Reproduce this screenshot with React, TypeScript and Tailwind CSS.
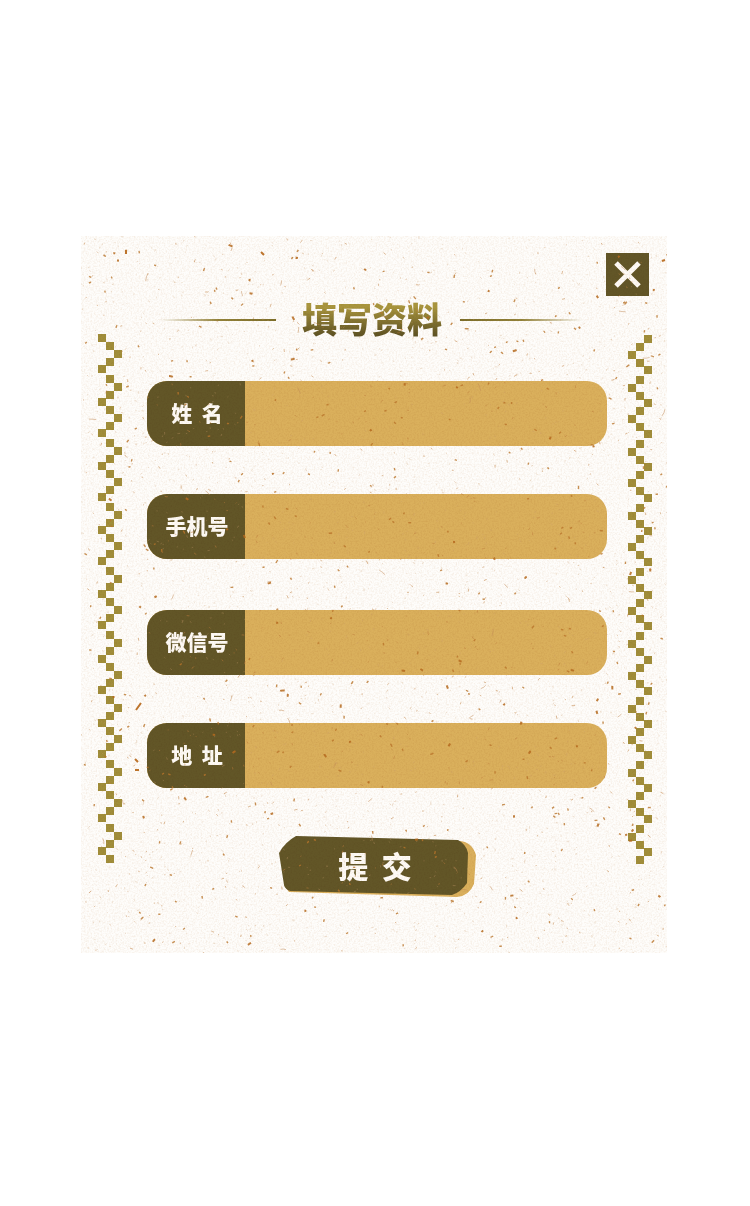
import { useMemo } from "react";

const WIDTH = 586;
const HEIGHT = 717;

function createRandom(seed: number) {
  let state = seed;
  return () => {
    state = (state * 1664525 + 1013904223) % 4294967296;
    return state / 4294967296;
  };
}

/** Short bent fibres, joined into one path per tone. */
function fibres(seed: number, count: number, min: number, max: number) {
  const random = createRandom(seed);
  let d = "";
  for (let i = 0; i < count; i++) {
    const x = random() * WIDTH;
    const y = random() * HEIGHT;
    const angle = random() * Math.PI * 2;
    const bend = angle + (random() - 0.5) * 1.4;
    const length = min + random() * random() * (max - min);
    const dx = Math.cos(angle) * length * 0.5;
    const dy = Math.sin(angle) * length * 0.5;
    const ex = dx + Math.cos(bend) * length * 0.5;
    const ey = dy + Math.sin(bend) * length * 0.5;
    d += `M${x.toFixed(1)} ${y.toFixed(1)}q${dx.toFixed(1)} ${dy.toFixed(1)} ${ex.toFixed(1)} ${ey.toFixed(1)}`;
  }
  return d;
}

function PaperTexture() {
  const layers = useMemo(
    () => [
      { d: fibres(11, 1700, 1, 3), color: "#c99a6c", opacity: 0.35, width: 1 },
      { d: fibres(29, 750, 1, 4), color: "#bd7c3c", opacity: 0.55, width: 1 },
      { d: fibres(53, 360, 2, 4), color: "#b9742b", opacity: 0.8, width: 1.4 },
      { d: fibres(71, 80, 2, 5), color: "#b56a1f", opacity: 0.85, width: 2 },
      { d: fibres(97, 40, 5, 9), color: "#c28a55", opacity: 0.5, width: 1 },
    ],
    [],
  );
  return (
    <>
      <svg
        aria-hidden="true"
        className="pointer-events-none absolute inset-0 h-full w-full mix-blend-multiply"
      >
        <filter id="grain" x="0" y="0" width="100%" height="100%">
          <feTurbulence type="fractalNoise" baseFrequency="0.6" numOctaves="3" seed="4" />
          <feColorMatrix values="0 0 0 0 0.72  0 0 0 0 0.52  0 0 0 0 0.36  0.55 0 0 0 -0.22" />
        </filter>
        <rect width="100%" height="100%" filter="url(#grain)" />
      </svg>
      <svg
        aria-hidden="true"
        className="pointer-events-none absolute inset-0 h-full w-full"
        viewBox={`0 0 ${WIDTH} ${HEIGHT}`}
        preserveAspectRatio="xMidYMid slice"
        fill="none"
      >
        {layers.map((layer) => (
          <path
            key={layer.color}
            d={layer.d}
            stroke={layer.color}
            strokeOpacity={layer.opacity}
            strokeWidth={layer.width}
          />
        ))}
        <path
          d="M55 474l5-7M54 523l3 3M54 534h4M45 14v4M180 16l3 3M581 25l3-1"
          stroke="#bd742c"
          strokeWidth="2"
        />
      </svg>
    </>
  );
}

const STEP_TOPS = [0, 8, 16, 24, 31, 41, 49, 57];
const STEP_COLUMNS = [0, 8, 16, 8];

function Zigzag({ mirrored = false }: { mirrored?: boolean }) {
  return (
    <svg
      aria-hidden="true"
      className="w-6 shrink-0"
      viewBox="0 0 24 530"
      height="530"
      fill="#a18e3a"
    >
      {Array.from({ length: 66 }, (_, i) => {
        const column = STEP_COLUMNS[i % 4];
        return (
          <rect
            key={i}
            x={mirrored ? 16 - column : column}
            y={Math.round(Math.floor(i / 8) * 64.1) + STEP_TOPS[i % 8] + (mirrored ? 1 : 0)}
            width="8"
            height="8"
          />
        );
      })}
    </svg>
  );
}

function Field({ id, label, type = "text" }: { id: string; label: string; type?: string }) {
  return (
    <div className="flex h-[65px] overflow-hidden rounded-[20px] bg-[#dab05c]">
      <label
        htmlFor={id}
        className="flex w-[98px] shrink-0 items-center justify-center bg-[#625627] pb-1 pl-0.5 text-[21px] leading-8 font-black whitespace-pre text-[#fefbf7]"
      >
        {label}
      </label>
      <input
        id={id}
        name={id}
        type={type}
        className="min-w-0 flex-1 bg-transparent px-4 text-xl text-[#5f5324] outline-none"
      />
    </div>
  );
}

export default function App() {
  return (
    <main className="min-h-screen bg-white pt-[236px] pr-[83px] pb-16 pl-[81px] font-['Noto_Sans_CJK_SC','Noto_Sans',sans-serif]">
      <section
        role="dialog"
        aria-labelledby="form-title"
        className="relative isolate mx-auto max-w-[586px] bg-[#fefdfb] pb-14"
      >
        <div className="flex justify-end pt-[17px] pr-[18px]">
          <button
            type="button"
            aria-label="关闭"
            className="flex size-[43px] items-center justify-center bg-[#625627]"
          >
            <svg viewBox="0 0 43 43" className="size-full" stroke="#fefbf7" strokeWidth="5">
              <path d="M10 10L33 33M33 10L10 33" />
            </svg>
          </button>
        </div>

        <h1
          id="form-title"
          className="-mt-0.5 flex items-center pr-[84px] pl-[79px] text-[35px] leading-[48px] font-black"
        >
          <span className="mr-[26px] h-0.5 w-[116px] shrink bg-linear-to-r from-transparent via-[#93833a] to-[#7d6e29]" />
          <span className="bg-linear-to-b from-[#a9963e] from-25% to-[#5f5324] to-80% bg-clip-text pb-1 text-transparent">
            填写资料
          </span>
          <span className="ml-[18px] h-0.5 flex-1 bg-linear-to-l from-transparent via-[#93833a] to-[#7d6e29]" />
        </h1>

        <div className="-mt-3 flex justify-between pr-[15px] pl-[17px]">
          <Zigzag />
          <form
            className="mr-[21px] ml-[25px] flex min-w-0 flex-1 flex-col pt-[47px]"
            onSubmit={(event) => event.preventDefault()}
          >
            <div className="flex flex-col gap-[51px]">
              <div className="flex flex-col gap-12">
                <Field id="name" label="姓  名" />
                <Field id="phone" label="手机号" type="tel" />
              </div>
              <div className="flex flex-col gap-12">
                <Field id="wechat" label="微信号" />
                <Field id="address" label="地  址" />
              </div>
            </div>
            <button
              type="submit"
              className="relative mt-12 h-[61px] w-[197px] self-center pb-0.5 text-[30px] leading-[57px] font-black whitespace-pre text-[#fefbf7]"
            >
              <svg
                aria-hidden="true"
                viewBox="0 0 197 61"
                className="absolute inset-0 size-full"
              >
                <path
                  d="M5 49L10 56L178 61Q190 60 195 48L197 19Q193 6 181 5L20 4Z"
                  fill="#dab05c"
                />
                <path
                  d="M17 0L179 4Q187 8 189 17L188 47Q182 56 173 59L11 55Q6 53 5 49L0 17Q6 6 17 0Z"
                  fill="#625627"
                />
              </svg>
              <span className="relative pr-1">提  交</span>
            </button>
          </form>
          <Zigzag mirrored />
        </div>
        <PaperTexture />
      </section>
    </main>
  );
}
